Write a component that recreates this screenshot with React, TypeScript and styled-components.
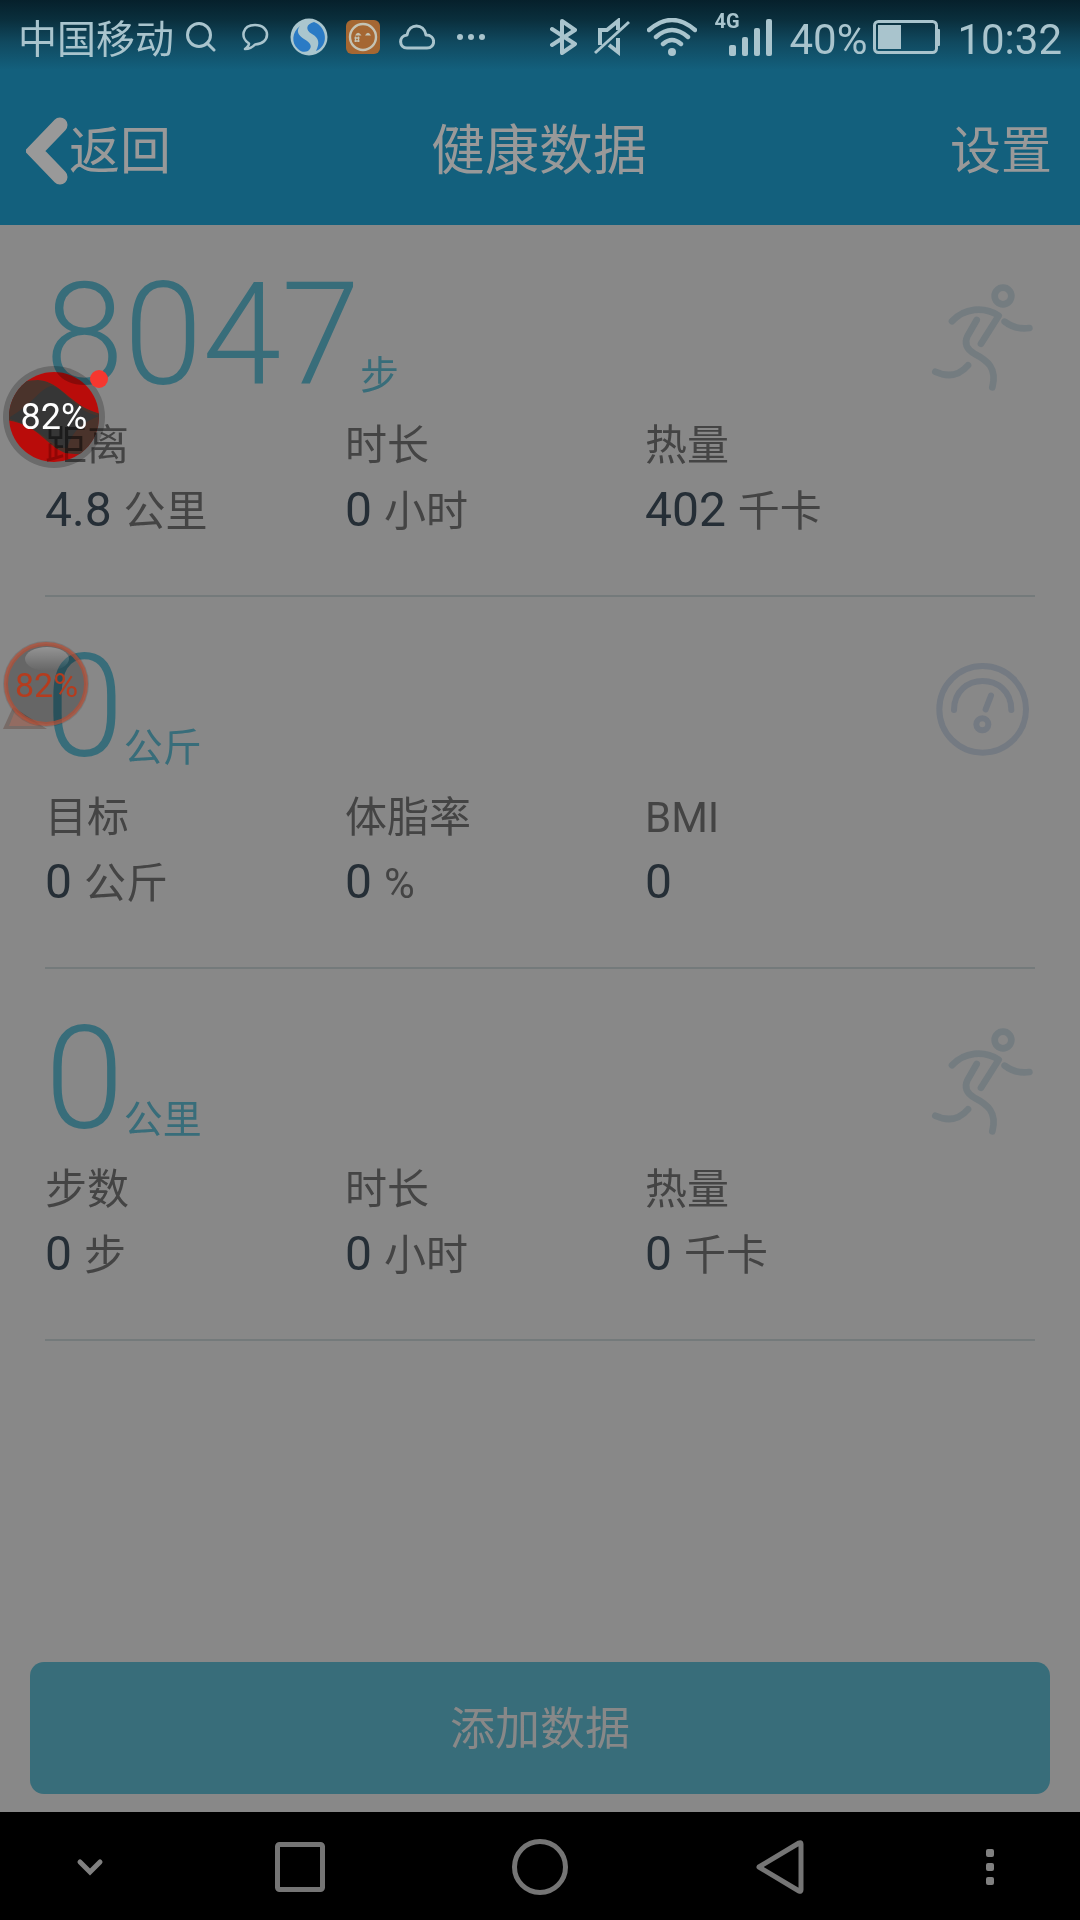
import React from "react";
import styled, { createGlobalStyle } from "styled-components";

const GlobalStyle = createGlobalStyle`
  *, *::before, *::after { box-sizing: border-box; }
  body { margin: 0; background: #888888; }
  button { margin: 0; padding: 0; border: 0; background: none; font: inherit; color: inherit; cursor: pointer; }
  svg { display: block; flex: none; }
`;

const Screen = styled.div`
  position: relative;
  display: flex;
  flex-direction: column;
  min-height: 100vh;
  background: #888888;
  color: #444444;
  font-family: Roboto, "Noto Sans CJK SC", sans-serif;
`;

const Header = styled.header`
  padding-bottom: 1px;
  background: linear-gradient(#06202b 0, #0a2f3d 20px, #10495f 42px, #13607d 70px, #13607d 100%);
`;

const StatusBar = styled.div`
  display: flex;
  justify-content: space-between;
  align-items: center;
  height: 74px;
  padding: 0 18px;
  color: #a9c4cd;
  font-size: 42px;
`;

const StatusGroup = styled.div<{ $gap: number }>`
  display: flex;
  align-items: center;
  gap: ${(p) => p.$gap}px;
`;

const Carrier = styled.span`
  padding-bottom: 2px;
  font-size: 39px;
`;

const StatusText = styled.span`
  padding-top: 4px;
`;

const IconCell = styled.span`
  display: flex;
  justify-content: center;
  width: 54px;
`;

const Signal = styled.span`
  position: relative;
  width: 58px;
`;

const Network = styled.span`
  position: absolute;
  left: 0;
  top: -9px;
  font-size: 20px;
  line-height: 24px;
  font-weight: 700;
`;

const TitleBar = styled.div`
  display: grid;
  grid-template-columns: 1fr auto 1fr;
  align-items: center;
  height: 150px;
  padding: 0 28px 5px 26px;
  color: #999999;
  font-size: 51px;
`;

const BackButton = styled.button`
  display: flex;
  align-items: center;
  justify-self: start;
`;

const Title = styled.h1`
  margin: 0;
  font-size: 54px;
  font-weight: 400;
`;

const SettingsButton = styled.button`
  justify-self: end;
`;

const Content = styled.main`
  flex: 1;
  padding: 0 45px;
`;

const Card = styled.section`
  height: 372px;
  padding-top: 41px;
  border-bottom: 2px solid #747a7b;
`;

const Summary = styled.div`
  display: flex;
  justify-content: space-between;
  align-items: flex-start;
  height: 150px;
  color: #386d7a;
`;

const Total = styled.div`
  display: flex;
  align-items: flex-end;
`;

const TotalFigure = styled.span`
  font-size: 142px;
  line-height: 140px;
  font-weight: 300;
`;

const TotalUnit = styled.span`
  font-size: 39px;
  line-height: 60px;
`;

const IconFrame = styled.span`
  padding-top: 14px;
`;

const Stats = styled.dl`
  display: grid;
  grid-template-columns: 10fr 10fr 13fr;
  margin: 0;
`;

const Label = styled.dt`
  font-size: 42px;
  line-height: 60px;
`;

const Value = styled.dd`
  margin: 0;
  font-size: 42px;
  line-height: 68px;
`;

const Figure = styled.span`
  color: #252e36;
  font-size: 48px;
`;

const Footer = styled.div`
  padding: 0 30px 18px;
`;

const AddButton = styled.button`
  width: 100%;
  height: 132px;
  padding-bottom: 5px;
  border-radius: 14px;
  background: #386d7a;
  color: #888888;
  font-size: 45px;
`;

const NavBar = styled.nav`
  display: grid;
  grid-template-columns: 3fr 4fr 4fr 4fr 3fr;
  height: 108px;
  padding-top: 2px;
  background: #000000;
`;

const NavButton = styled.button`
  display: flex;
  align-items: center;
  justify-content: center;
`;

const Floating = styled.div<{ $top: number; $size: number; $left: number }>`
  position: absolute;
  left: ${(p) => p.$left}px;
  top: ${(p) => p.$top}px;
  width: ${(p) => p.$size}px;
  height: ${(p) => p.$size}px;
  display: flex;
  align-items: center;
  justify-content: center;
`;

const Layer = styled.svg<{ $blend?: string }>`
  position: absolute;
  inset: 0;
  overflow: visible;
  mix-blend-mode: ${(p) => p.$blend ?? "normal"};
`;

const Percent = styled.span<{ $color: string; $size: number }>`
  position: relative;
  color: ${(p) => p.$color};
  font-size: ${(p) => p.$size}px;
`;

const Runner = () => (
  <svg width="105" height="115" viewBox="90 60 315 345" fill="none" stroke="#747c80" strokeWidth="20" strokeLinecap="round" strokeLinejoin="round">
    <circle cx="309" cy="108" r="25" />
    <path d="M156 184C192 144 252 138 296 167L243 251" />
    <path d="M314 185Q346 210 388 204" />
    <path d="M230 180L202 229C192 250 200 268 223 281C262 301 292 324 277 382" />
    <path d="M106 335Q164 362 204 316" />
  </svg>
);

const Gauge = () => (
  <svg width="105" height="115" viewBox="90 36 315 345" fill="none" stroke="#747a82" strokeWidth="18" strokeLinecap="round">
    <circle cx="248" cy="208" r="130" />
    <path d="M162 210C162 94 334 94 334 210" />
    <path d="M257 208L273 167" />
    <circle cx="247" cy="253" r="18" />
  </svg>
);

type Stat = { label: string; value: string; unit?: string };
type CardData = { total: string; unit: string; icon: React.ReactNode; stats: Stat[] };

const cards: CardData[] = [
  {
    total: "8047",
    unit: "步",
    icon: <Runner />,
    stats: [
      { label: "距离", value: "4.8", unit: "公里" },
      { label: "时长", value: "0", unit: "小时" },
      { label: "热量", value: "402", unit: "千卡" },
    ],
  },
  {
    total: "0",
    unit: "公斤",
    icon: <Gauge />,
    stats: [
      { label: "目标", value: "0", unit: "公斤" },
      { label: "体脂率", value: "0", unit: "%" },
      { label: "BMI", value: "0" },
    ],
  },
  {
    total: "0",
    unit: "公里",
    icon: <Runner />,
    stats: [
      { label: "步数", value: "0", unit: "步" },
      { label: "时长", value: "0", unit: "小时" },
      { label: "热量", value: "0", unit: "千卡" },
    ],
  },
];

const StatusIconsLeft = () => (
  <>
    <IconCell>
      <svg width="30" height="30" viewBox="0 0 30 30" fill="none" stroke="currentColor" strokeWidth="3" strokeLinecap="round">
        <circle cx="13" cy="13" r="11.5" />
        <path d="M21 21L28 28" />
      </svg>
    </IconCell>
    <IconCell>
      <svg width="28" height="28" viewBox="0 0 28 28" fill="none" stroke="currentColor" strokeWidth="2.6" strokeLinejoin="round">
        <path d="M8 20.5C-1 15 1 2 14 2C30 2 30 21 14 21.5Q10 26 4 26Q8 23 8 20.5Z" />
      </svg>
    </IconCell>
    <IconCell>
      <svg width="38" height="38" viewBox="0 0 38 38">
        <circle cx="19" cy="19" r="18.5" fill="#aac6ce" />
        <path d="M10 8C2 14 1 25 8 31C11 34 15 34.500 18 33C23 29 21 25 14 21C8 17 6 13 10 8Z" fill="#2b7bc5" />
        <path d="M24 4C33 7 38 19 33 27C31 30 29 32 26 33C30 25 29 20 22 16C15 12 16 6 24 4Z" fill="#2b7bc5" />
      </svg>
    </IconCell>
    <IconCell>
      <svg width="34" height="34" viewBox="0 0 34 34" fill="none" stroke="#c4c3b4">
        <rect width="34" height="34" rx="6" fill="#a56732" stroke="none" />
        <circle cx="17" cy="17" r="13" strokeWidth="2.4" />
        <path d="M9 15.500Q12 10 15.500 15.500ZM19 15.500Q22 10 25 15.500Z" fill="#c4c3b4" stroke="none" />
        <path d="M8.500 18H13.500M8.500 21H13.500M9.500 16.500V22M12.500 16.500V22" strokeWidth="1.300" />
      </svg>
    </IconCell>
    <IconCell>
      <svg width="36" height="26" viewBox="0 0 36 26" fill="none" stroke="currentColor" strokeWidth="3" strokeLinejoin="round">
        <path d="M8 24C0 24 -1 12 8 11C10 -1 25 -1 27 11C37 11 37 24 28 24Z" />
      </svg>
    </IconCell>
    <IconCell>
      <svg width="28" height="6" viewBox="0 0 28 6" fill="currentColor">
        <circle cx="3" cy="3" r="3" />
        <circle cx="14" cy="3" r="3" />
        <circle cx="25" cy="3" r="3" />
      </svg>
    </IconCell>
  </>
);

const StatusIconsRight = () => (
  <>
    <svg width="27" height="38" viewBox="0 0 27 38" fill="none" stroke="currentColor" strokeWidth="4" strokeLinecap="round" strokeLinejoin="round">
      <path d="M2 11L25 26L12 35V3L25 12L2 27" />
    </svg>
    <svg width="36" height="38" viewBox="0 0 36 38" fill="none" stroke="currentColor" strokeWidth="3">
      <path d="M6 27V12H13L24 3V12M24 20V34L15 27" strokeWidth="4" />
      <path d="M1 35L35 4" />
    </svg>
    <svg width="50" height="38" viewBox="0 0 50 38" fill="none" stroke="currentColor" strokeWidth="4.4" strokeLinecap="round">
      <path d="M2 12Q25 -8 48 12M9 19Q25 5 41 19M16 26Q25 18 34 26" />
      <circle cx="25" cy="34" r="4" fill="currentColor" stroke="none" />
    </svg>
    <Signal>
      <Network>4G</Network>
      <svg width="58" height="38" viewBox="0 0 58 38" fill="currentColor">
        <rect x="15" y="27" width="7" height="11" rx="2" />
        <rect x="28" y="19" width="6" height="19" rx="2" />
        <rect x="40" y="10" width="6" height="28" rx="2" />
        <rect x="52" y="1" width="6" height="37" rx="2" />
      </svg>
    </Signal>
  </>
);

const Battery = () => (
  <svg width="67" height="34" viewBox="0 0 67 34" fill="none">
    <rect x="1.5" y="1.5" width="62" height="31" rx="4" stroke="currentColor" strokeWidth="3" />
    <rect x="5" y="5" width="23" height="24" fill="currentColor" />
    <rect x="64" y="9" width="3" height="17" rx="1" fill="currentColor" />
  </svg>
);

const WAVE = "M-6 53C-2 25 12 14 35 14C62 16 66 44 108 50C100 90 82 90 62 87C40 78 36 56 -6 53Z";
const DIAMOND = "M7 51C27 40 38 22 48 20C60 20 72 46 96 50C76 58 70 66 64 82C52 84 36 60 7 53Z";

export default function App() {
  return (
    <>
      <GlobalStyle />
      <Screen lang="zh-CN">
        <Header>
          <StatusBar>
            <StatusGroup $gap={0}>
              <Carrier>中国移动</Carrier>
              <StatusIconsLeft />
            </StatusGroup>
            <StatusGroup $gap={17}>
              <StatusIconsRight />
              <StatusGroup $gap={6}>
                <StatusText>40%</StatusText>
                <Battery />
              </StatusGroup>
              <StatusText>10:32</StatusText>
            </StatusGroup>
          </StatusBar>
          <TitleBar>
            <BackButton type="button">
              <svg width="43" height="78" viewBox="0 -8 43 78" fill="none" stroke="currentColor" strokeWidth="15">
                <path d="M34 9L9 35L34 61" strokeLinecap="round" />
              </svg>
              返回
            </BackButton>
            <Title>健康数据</Title>
            <SettingsButton type="button">设置</SettingsButton>
          </TitleBar>
        </Header>

        <Content>
          {cards.map((card, i) => (
            <Card key={i}>
              <Summary>
                <Total>
                  <TotalFigure>{card.total}</TotalFigure>
                  <TotalUnit>{card.unit}</TotalUnit>
                </Total>
                <IconFrame>{card.icon}</IconFrame>
              </Summary>
              <Stats>
                {card.stats.map((s) => (
                  <div key={s.label}>
                    <Label>{s.label}</Label>
                    <Value>
                      <Figure>{s.value} </Figure>
                      {s.unit}
                    </Value>
                  </div>
                ))}
              </Stats>
            </Card>
          ))}
        </Content>

        <Footer>
          <AddButton type="button">添加数据</AddButton>
        </Footer>

        <NavBar>
          <NavButton type="button" aria-label="收起">
            <svg width="28" height="18" viewBox="0 0 28 18" fill="none" stroke="#808080" strokeWidth="5" strokeLinecap="round">
              <path d="M4 4L14 14L24 4" />
            </svg>
          </NavButton>
          <NavButton type="button" aria-label="最近任务">
            <svg width="50" height="50" viewBox="0 0 50 50" fill="none" stroke="#757575" strokeWidth="5">
              <rect x="2.5" y="2.5" width="45" height="45" rx="2" />
            </svg>
          </NavButton>
          <NavButton type="button" aria-label="主屏幕">
            <svg width="56" height="56" viewBox="0 0 56 56" fill="none" stroke="#757575" strokeWidth="5">
              <circle cx="28" cy="28" r="25.5" />
            </svg>
          </NavButton>
          <NavButton type="button" aria-label="后退">
            <svg width="48" height="54" viewBox="0 0 48 54" fill="none" stroke="#757575" strokeWidth="5" strokeLinejoin="round">
              <path d="M3 27L43 3Q45 2 45 4V50Q45 52 43 51Z" />
            </svg>
          </NavButton>
          <NavButton type="button" aria-label="更多">
            <svg width="8" height="36" viewBox="0 0 8 36" fill="#808080">
              <rect width="8" height="8" rx="2" />
              <rect y="14" width="8" height="8" rx="2" />
              <rect y="28" width="8" height="8" rx="2" />
            </svg>
          </NavButton>
        </NavBar>

        <Floating $left={3} $top={366} $size={102}>
          <Layer $blend="multiply" viewBox="0 0 102 102" width="102" height="102">
            <defs>
              <clipPath id="ball">
                <circle cx="51" cy="51" r="45" />
              </clipPath>
            </defs>
            <circle cx="51" cy="51" r="51" fill="#c8c8c8" />
            <circle cx="51" cy="51" r="45" fill="#ff1612" />
            <g clipPath="url(#ball)">
              <path d={WAVE} fill="#8a6050" />
              <path d={DIAMOND} fill="#646464" />
            </g>
          </Layer>
          <Layer $blend="screen" viewBox="0 0 102 102" width="102" height="102">
            <g clipPath="url(#ball)">
              <path d={`M-9 -9H111V111H-9Z${WAVE}`} fill="#680000" fillRule="evenodd" />
            </g>
          </Layer>
          <Layer viewBox="0 0 102 102" width="102" height="102">
            <circle cx="96" cy="13" r="9" fill="#f6372f" />
          </Layer>
          <Percent $color="#ffffff" $size={36}>82%</Percent>
        </Floating>

        <Floating $left={3} $top={641} $size={87}>
          <Layer viewBox="0 0 86 86" width="86" height="86">
            <defs>
              <linearGradient id="gloss" x1="0" y1="0" x2="0" y2="1">
                <stop offset="0" stopColor="#fff" stopOpacity=".3" />
                <stop offset="1" stopColor="#fff" stopOpacity="0" />
              </linearGradient>
            </defs>
            <path d="M10 66L0 88H44Z" fill="#776b67" />
            <path d="M12 70L6 85H36Z" fill="#936c62" />
            <circle cx="43" cy="43" r="43" fill="#000" fillOpacity=".1" />
            <circle cx="43" cy="43" r="40" fill="#000" fillOpacity=".16" />
            <circle cx="43" cy="43" r="40" fill="none" stroke="#b64e35" strokeOpacity=".7" strokeWidth="4" />
            <ellipse cx="44" cy="18" rx="22" ry="12" fill="url(#gloss)" />
          </Layer>
          <Percent $color="#b53c1e" $size={34}>82%</Percent>
        </Floating>
      </Screen>
    </>
  );
}
